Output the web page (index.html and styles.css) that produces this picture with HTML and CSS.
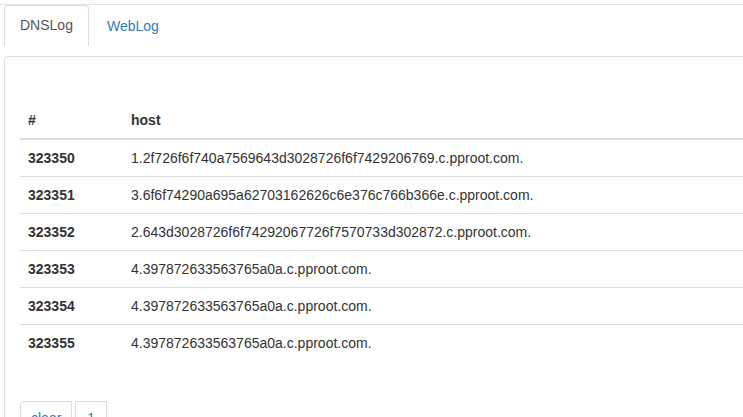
FILE: index.html
```html
<!DOCTYPE html>
<html>
<head>
<meta charset="utf-8">
<link rel="stylesheet" href="styles.css">
</head>
<body>
<div class="topbar"></div>
<div class="page">
  <ul class="tabs">
    <li class="tab active"><a>DNSLog</a></li>
    <li class="tab"><a>WebLog</a></li>
  </ul>
  <div class="panel">
    <table class="table">
      <thead>
        <tr><th class="col-id">#</th><th>host</th></tr>
      </thead>
      <tbody>
        <tr><td class="col-id">323350</td><td>1.2f726f6f740a7569643d3028726f6f7429206769.c.pproot.com.</td></tr>
        <tr><td class="col-id">323351</td><td>3.6f6f74290a695a62703162626c6e376c766b366e.c.pproot.com.</td></tr>
        <tr><td class="col-id">323352</td><td>2.643d3028726f6f74292067726f7570733d302872.c.pproot.com.</td></tr>
        <tr><td class="col-id">323353</td><td>4.397872633563765a0a.c.pproot.com.</td></tr>
        <tr><td class="col-id">323354</td><td>4.397872633563765a0a.c.pproot.com.</td></tr>
        <tr><td class="col-id">323355</td><td>4.397872633563765a0a.c.pproot.com.</td></tr>
      </tbody>
    </table>
    <div class="pager">
      <a class="page-btn">clear</a>
      <a class="page-btn">1</a>
    </div>
  </div>
</div>
</body>
</html>
```

FILE: styles.css
```css
html, body {
  margin: 0;
  padding: 0;
  background: #fff;
  overflow: hidden;
}
body {
  font-family: "Liberation Sans", Arial, sans-serif;
  font-size: 14px;
  line-height: 20px;
  color: #333;
}
.topbar {
  height: 4px;
  border-bottom: 1px solid #e3e3e3;
}
.page {
  padding-left: 4px;
  width: 780px;
}
.tabs {
  list-style: none;
  margin: 0;
  padding: 0;
  display: flex;
  gap: 2px;
}
.tab a {
  display: block;
  padding: 10px 15px 11px;
  border: 1px solid transparent;
  border-bottom: 0;
  border-radius: 4px 4px 0 0;
  color: #337ab7;
}
.tab.active a {
  border-color: #ddd;
  color: #555;
  padding-top: 9px;
}
.panel {
  margin-top: 9px;
  border: 1px solid #ddd;
  border-radius: 4px;
  padding: 45px 15px 0;
  height: 400px;
}
.table {
  width: 100%;
  border-collapse: collapse;
  margin-bottom: 40px;
}
.table th, .table td {
  text-align: left;
  padding: 8px;
  vertical-align: top;
}
.table th {
  font-weight: bold;
  border-bottom: 2px solid #ddd;
}
.table td {
  border-top: 1px solid #ddd;
}
.table .col-id {
  width: 87px;
}
.table td.col-id {
  font-weight: bold;
}
.pager {
  display: flex;
  gap: 3px;
}
.page-btn {
  display: block;
  padding: 6px 10px;
  border: 1px solid #ddd;
  color: #337ab7;
  text-decoration: none;
}
.page-btn:first-child {
  border-radius: 4px 0 0 4px;
}
.page-btn:last-child {
  padding: 6px 11px;
}
```
